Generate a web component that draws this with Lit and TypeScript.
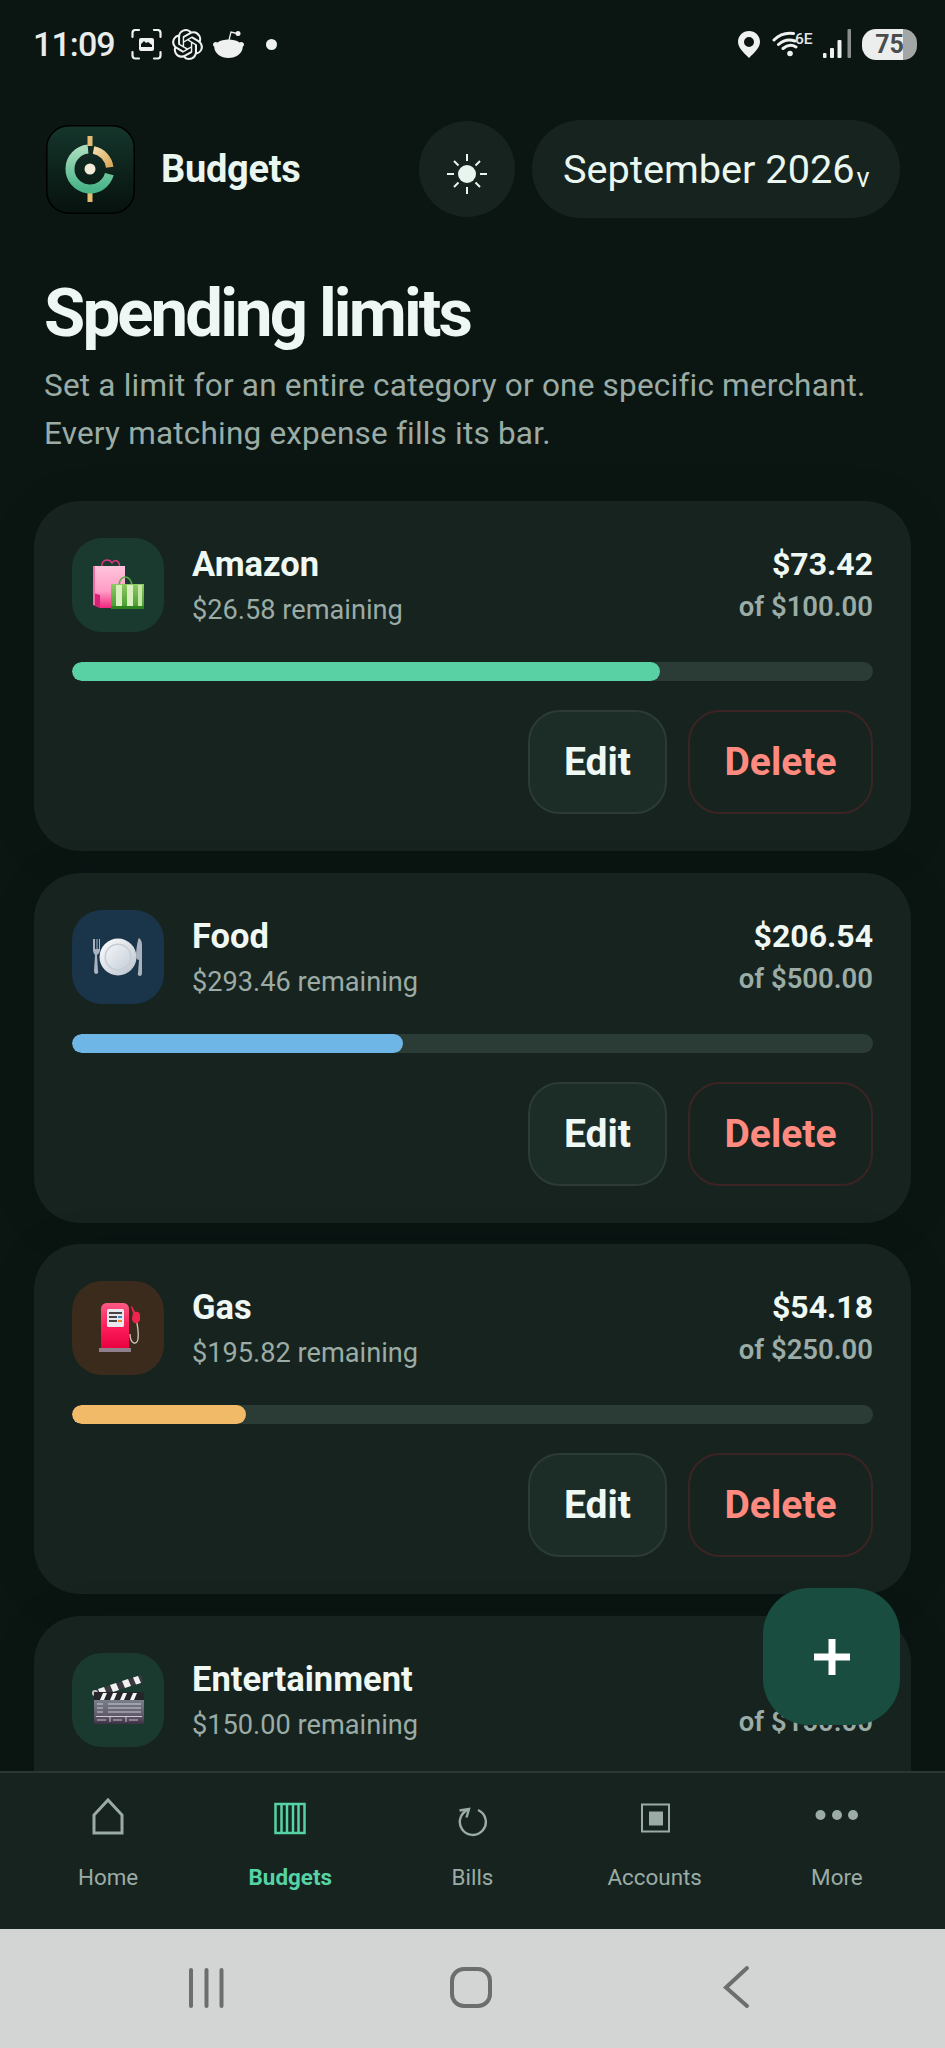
import { LitElement, html, css, svg } from "lit";
import { customElement } from "lit/decorators.js";

const bags = svg`<svg class="emoji" viewBox="0 0 52 52"><defs>
<linearGradient id="pk" x1="0" y1="0" x2="0" y2="1"><stop offset="0" stop-color="#ffc4dc"/><stop offset=".6" stop-color="#ff9cc6"/><stop offset="1" stop-color="#f0277f"/></linearGradient>
<linearGradient id="gn" x1="0" y1="0" x2="0" y2="1"><stop offset="0" stop-color="#8fca62"/><stop offset="1" stop-color="#3f9a2c"/></linearGradient></defs>
<path d="M10 10C9 3 12 1 15 1s4 1 5 3c1-2 3-3 5-2 2 1 3 4 2 8" fill="none" stroke="#d8377f" stroke-width="1.500"/>
<path d="M3 7h30v42H8l-7-3z" fill="url(#pk)"/><path d="M1 34l7 2v13l-7-3z" fill="#d81f78"/><path d="M1 7h2v39H1z" fill="#f76aa8"/>
<path d="M27 27c0-6 3-9 6-9s7 3 7 9" fill="none" stroke="#5aae42" stroke-width="1.500"/>
<rect x="19" y="25" width="33" height="25" fill="url(#gn)"/>
<rect x="24" y="26" width="6" height="23" fill="#d9efc0"/><rect x="35" y="26" width="6" height="23" fill="#d9efc0"/><rect x="46" y="26" width="4" height="23" fill="#c5e6a6"/>
<rect x="19" y="47" width="33" height="3" fill="#2f8422"/></svg>`;

const plate = svg`<svg class="emoji" viewBox="0 0 52 52"><defs>
<linearGradient id="pl" x1="0" y1="0" x2="1" y2="1"><stop offset="0" stop-color="#fff"/><stop offset="1" stop-color="#b9c2cc"/></linearGradient>
<linearGradient id="pi" x1="0" y1="0" x2="1" y2="1"><stop offset="0" stop-color="#f2f4f7"/><stop offset="1" stop-color="#c8d0d9"/></linearGradient></defs>
<path d="M1 1v11c0 3 1.500 4 2 5l-1 16c0 2 1 3 2 3s3-1 2-3L5 17c1-1 3-2 3-5V1H7v10H5.500V1h-1v10H3V1z" fill="#aab3bd" transform="translate(0 7)"/>
<circle cx="26" cy="26" r="18.500" fill="url(#pl)"/><circle cx="26" cy="26" r="13.500" fill="#c4ccd5"/><circle cx="26" cy="26" r="12" fill="url(#pi)"/>
<path d="M46 0c2.500 2 3 4 3 7v28c0 2-1 3-2 3s-3-1-2-3l1-13c-1 0-3-1-3-3 0-8 2-19 3-19z" fill="#aab3bd" transform="translate(1 7)"/></svg>`;

const pump = svg`<svg class="emoji" viewBox="0 0 52 52"><defs>
<linearGradient id="rd" x1="0" y1="0" x2="0" y2="1"><stop offset="0" stop-color="#ff5a85"/><stop offset=".5" stop-color="#ff1f5c"/><stop offset="1" stop-color="#e8003f"/></linearGradient></defs>
<path d="M9 47V7c0-4 3-6 6-6h16c3 0 6 2 6 6v40z" fill="url(#rd)"/>
<rect x="15" y="7" width="17" height="18" rx="1.500" fill="#e8e8ee"/>
<rect x="17" y="10" width="13" height="2" fill="#444"/><rect x="17" y="14" width="8" height="2" fill="#444"/><rect x="26" y="14" width="4" height="2" fill="#3c8bc9"/><rect x="17" y="18" width="8" height="2" fill="#444"/><rect x="26" y="18" width="4" height="2" fill="#e58a2d"/>
<rect x="7" y="46" width="32" height="4" fill="#8f7f8a"/>
<path d="M38 32c0 10 7 12 8 5 .5-4-.5-14-2-20" fill="none" stroke="#d4cdbf" stroke-width="1.300"/>
<path d="M40 4l3 6c2-1 5 0 5 3v4c0 3-3 5-5 4-2 0-3-3-3-5l1-5-2-6z" fill="#f0244f"/></svg>`;

const clapper = svg`<svg class="emoji" viewBox="0 0 52 52"><defs>
<linearGradient id="cb" x1="0" y1="0" x2="0" y2="1"><stop offset="0" stop-color="#79808a"/><stop offset=".7" stop-color="#5f5668"/><stop offset="1" stop-color="#3d2f45"/></linearGradient></defs>
<path d="M1 17L49 1l2 7L3 24z" fill="#3c3a40"/>
<path d="M6 15l6-2 3 7-6 2zM18 11l6-2 3 7-6 2zM30 7l6-2 3 7-6 2zM41 3.500l5-1.500 3 7-5 1.500z" fill="#f1f1f1"/>
<circle cx="3" cy="19" r="3" fill="#c9c9cc"/>
<rect x="2" y="18" width="50" height="9" fill="#26252b"/>
<path d="M11 19h4l-3 7H8zM21 19h4l-3 7h-4zM31 19h4l-3 7h-4zM41 19h4l-3 7h-4z" fill="#f4f4f4"/>
<rect x="2" y="26" width="50" height="24" fill="url(#cb)"/>
<path d="M5 30h6M5 34h6M5 38h6M16 30h33M16 34h33M16 38h33M4 42.500h46M18 43v5M34 43v5" stroke="#d5d6da" stroke-width=".9" fill="none"/>
<path d="M5 46h9M21 46h9M37 46h9" stroke="#c0bfc7" stroke-width="1"/></svg>`;

interface Budget { name: string; spent: number; limit: number; icon: unknown; tint: string; fill: string; partial?: boolean; }
const budgets: Budget[] = [
  { name: "Amazon", spent: 73.42, limit: 100, icon: bags, tint: "green", fill: "#5ad1a5" },
  { name: "Food", spent: 206.54, limit: 500, icon: plate, tint: "blue", fill: "#6db6e6" },
  { name: "Gas", spent: 54.18, limit: 250, icon: pump, tint: "brown", fill: "#f0ba69" },
  { name: "Entertainment", spent: 0, limit: 150, icon: clapper, tint: "green", fill: "#5ad1a5", partial: true },
];
const money = (n: number) => "$" + n.toFixed(2);

@customElement("app-root")
export class AppRoot extends LitElement {
  static styles = css`
    :host { display: block; font-family: Roboto, "Noto Sans", sans-serif; }
    * { box-sizing: border-box; }
    .screen { position: relative; height: 2048px; display: flex; flex-direction: column; overflow: hidden; background: #0b1613; color: #eaf6f0; }
    .status { height: 88px; flex: none; display: flex; align-items: center; justify-content: space-between; padding: 0 28px 0 33px; }
    .st-left, .st-right { display: flex; align-items: center; }
    .time { font-size: 34px; font-weight: 500; color: #e8ecea; width: 88px; letter-spacing: -.9px; }
    .st-left svg { display: block; }
    .st-left { gap: 10px; }
    .dot { width: 11px; height: 11px; border-radius: 50%; background: #eef1ef; margin-left: 11.500px; }
    .st-right svg { display: block; }
    .wifi { margin-left: 12px; }
    .signal { margin-left: 7px; }
    .battery { width: 55px; height: 31px; border-radius: 14px; margin-left: 10px; background: linear-gradient(90deg, #eceeed 0 75%, #a2a6a4 75% 100%); color: #4a4d4c; font-size: 25px; font-weight: 700; display: flex; align-items: center; justify-content: center; }
    .main { flex: 1; min-height: 0; overflow: hidden; }
    .top { display: flex; align-items: center; height: 98px; margin-top: 32px; padding: 0 45px 0 46px; }
    .logo { width: 89px; height: 89px; flex: none; display: block; }
    .app-name { font-size: 38px; font-weight: 700; margin-left: 26px; flex: 1; letter-spacing: -.3px; }
    .theme { width: 96px; height: 96px; border-radius: 50%; background: #16231f; display: flex; align-items: center; justify-content: center; flex: none; }
    .theme svg { display: block; margin-top: 10px; }
    .month { height: 98px; width: 368px; margin-left: 17px; border-radius: 49px; background: #16231f; display: flex; align-items: center; padding-left: 31px; font-size: 39.700px; flex: none; }
    .chev { display: inline-block; font-size: 27px; margin-left: 2px; transform: translateY(4px); }
    .intro { padding: 0 44px; margin-top: 57px; }
    h1 { margin: 0; font-size: 67px; line-height: 76px; font-weight: 700; letter-spacing: -2.850px; color: #eef7f3; }
    .intro p { margin: 11px 0 0; font-size: 31.500px; line-height: 48px; color: #9aaca5; letter-spacing: .2px; }
    .list { padding: 0 34px; margin-top: 43px; display: flex; flex-direction: column; gap: 21.500px; }
    .card { background: #17231f; border-radius: 46px; padding: 37px 38px; height: 350px; flex: none; box-shadow: 0 4px 40px rgba(0,0,0,.18); }
    .head { display: flex; align-items: flex-start; height: 94px; }
    .ic { width: 92px; height: 94px; border-radius: 30px; display: flex; align-items: center; justify-content: center; flex: none; }
    .ic.green { background: #1a3a30; }
    .ic.blue { background: #1a344a; }
    .ic.brown { background: #3b2b1c; }
    .emoji { width: 52px; height: 52px; display: block; }
    .info { flex: 1; margin-left: 28px; padding-top: 5px; }
    .name { font-size: 34.500px; font-weight: 700; line-height: 42px; color: #eff8f3; }
    .sub { font-size: 27.200px; line-height: 42px; margin-top: 4px; color: #9aaca5; }
    .amt { text-align: right; padding-top: 5px; }
    .spent { font-size: 32px; font-weight: 700; line-height: 42px; color: #eff8f3; }
    .of { font-size: 27.500px; font-weight: 600; line-height: 42px; margin-top: 1px; color: #9aaca5; }
    .track { margin-top: 30px; height: 19px; border-radius: 10px; background: #2b3b35; overflow: hidden; }
    .bar { height: 100%; border-radius: 10px; }
    .actions { margin-top: 29px; display: flex; justify-content: flex-end; gap: 21px; }
    .btn { height: 104px; border-radius: 32px; display: flex; align-items: center; justify-content: center; font-size: 39px; font-weight: 700; }
    .edit { width: 139px; background: #1c2c27; border: 2px solid #2c3b36; color: #eff8f3; }
    .del { width: 185px; border: 2px solid #3c2424; color: #ff8a80; }
    .fab { position: absolute; left: 763px; top: 1588px; width: 137px; height: 137px; border-radius: 46px; background: #184d3f; display: flex; align-items: center; justify-content: center; }
    .nav { flex: none; height: 158px; background: #16231f; border-top: 2px solid #2a3833; padding: 0 17px; display: grid; grid-template-columns: repeat(5, 1fr); }
    .tab { display: flex; flex-direction: column; align-items: center; color: #9aaca5; font-size: 22.400px; }
    .tab svg { display: block; margin-top: 24px; height: 40px; }
    .tab span { margin-top: 25px; line-height: 30px; }
    .tab.on { color: #56d3a5; font-weight: 700; }
    .sys { flex: none; height: 119px; background: #d3d5d4; display: flex; align-items: center; justify-content: center; }
    .sys svg { display: block; }
  `;

  render() {
    return html`<div class="screen">
      <div class="status">
        <div class="st-left">
          <div class="time">11:09</div>
          <svg width="31" height="31" viewBox="0 0 31 31" fill="none" stroke="#eef1ef" stroke-width="2.200" stroke-linecap="round"><path d="M1.500 8V4q0-3 3-3H8M23 1h3.500q3 0 3 3v4M29.500 23v3.500q0 3-3 3H23M8 29.500H4.500q-3 0-3-3V23"/><rect x="8" y="9" width="15" height="13" rx="2" fill="#eef1ef" stroke="none"/><path d="M10 15l3-3 2 2 2-1 4 3v2H10z" fill="#0b1613" stroke="none"/></svg>
          <svg width="31" height="31" viewBox="0 0 24 24" fill="#eef1ef"><path d="M22.2819 9.8211a5.9847 5.9847 0 0 0-.5157-4.9108 6.0462 6.0462 0 0 0-6.5098-2.9A6.0651 6.0651 0 0 0 4.9807 4.1818a5.9847 5.9847 0 0 0-3.9977 2.9 6.0462 6.0462 0 0 0 .7427 7.0966 5.98 5.98 0 0 0 .511 4.9107 6.051 6.051 0 0 0 6.5146 2.9001A5.9847 5.9847 0 0 0 13.2599 24a6.0557 6.0557 0 0 0 5.7718-4.2058 5.9894 5.9894 0 0 0 3.9977-2.9001 6.0557 6.0557 0 0 0-.7475-7.0729zm-9.022 12.6081a4.4755 4.4755 0 0 1-2.8764-1.0408l.1419-.0804 4.7783-2.7582a.7948.7948 0 0 0 .3927-.6813v-6.7369l2.02 1.1686a.071.071 0 0 1 .038.052v5.5826a4.504 4.504 0 0 1-4.4945 4.4944zm-9.6607-4.1254a4.4708 4.4708 0 0 1-.5346-3.0137l.142.0852 4.783 2.7582a.7712.7712 0 0 0 .7806 0l5.8428-3.3685v2.3324a.0804.0804 0 0 1-.0332.0615L9.74 19.9502a4.4992 4.4992 0 0 1-6.1408-1.6464zM2.3408 7.8956a4.485 4.485 0 0 1 2.3655-1.9728V11.6a.7664.7664 0 0 0 .3879.6765l5.8144 3.3543-2.0201 1.1685a.0757.0757 0 0 1-.071 0l-4.8303-2.7865A4.504 4.504 0 0 1 2.3408 7.872zm16.5963 3.8558L13.1038 8.364 15.1192 7.2a.0757.0757 0 0 1 .071 0l4.8303 2.7913a4.4944 4.4944 0 0 1-.6765 8.1042v-5.6772a.79.79 0 0 0-.407-.667zm2.0107-3.0231l-.142-.0852-4.7735-2.7818a.7759.7759 0 0 0-.7854 0L9.409 9.2297V6.8974a.0662.0662 0 0 1 .0284-.0615l4.8303-2.7866a4.4992 4.4992 0 0 1 6.6802 4.66zM8.3065 12.863l-2.02-1.1638a.0804.0804 0 0 1-.038-.0567V6.0742a4.4992 4.4992 0 0 1 7.3757-3.4537l-.142.0805L8.704 5.459a.7948.7948 0 0 0-.3927.6813zm1.0976-2.3654l2.602-1.4998 2.6069 1.4998v2.9994l-2.5974 1.4997-2.6067-1.4997Z"/></svg>
          <svg width="31" height="29" viewBox="0 0 31 29" fill="#eef1ef"><path d="M0 14.500c0-2 2.500-3.300 4.500-2 3-2.200 7-3 11-3s8 .8 11 3c2-1.300 4.500 0 4.500 2 0 1-.6 1.800-1.200 2.200C29.500 23.500 23 28 15.500 28S1.500 23.500 1.200 16.700C.6 16.300 0 15.500 0 14.500z"/><path d="M16 10l2-8 6 1.500" fill="none" stroke="#eef1ef" stroke-width="1.300"/><circle cx="25" cy="3.500" r="2.500"/></svg>
          <div class="dot"></div>
        </div>
        <div class="st-right">
          <svg width="22" height="27" viewBox="0 0 22 27"><path fill-rule="evenodd" d="M11 0C5 0 0 4.700 0 10.800 0 17 6 22 11 27c5-5 11-10 11-16.200C22 4.700 17 0 11 0zm0 6a5 5 0 1 1 0 10 5 5 0 0 1 0-10z" fill="#eef1ef"/></svg>
          <svg class="wifi" width="44" height="28" viewBox="0 0 44 28"><path d="M2 10C8 4 15 2.500 21.500 3.500M6.500 14.500c5-4.500 11-5.500 16.500-3.500M11 18.500c4-3.500 9-4 13-1.500" fill="none" stroke="#eef1ef" stroke-width="3" stroke-linecap="round"/><circle cx="18" cy="23.500" r="2.800" fill="#eef1ef"/><text x="23" y="13.500" font-size="15.500" font-weight="500" fill="#e4e7e5" font-family="Roboto">6E</text></svg>
          <svg class="signal" width="29" height="30" viewBox="0 0 29 30"><rect x="0" y="24" width="3.500" height="5" rx="1" fill="#eef1ef"/><rect x="7" y="19" width="4" height="10" rx="1" fill="#eef1ef"/><rect x="14.500" y="11" width="4" height="18" rx="1" fill="#eef1ef"/><rect x="24.500" y="0" width="3.500" height="29" rx="1" fill="#8a8e8c"/></svg>
          <div class="battery">75</div>
        </div>
      </div>
      <div class="main">
        <div class="top">
          <svg class="logo" viewBox="0 0 89 89"><defs>
            <linearGradient id="lg" x1="0" y1="0" x2="0" y2="1"><stop offset="0" stop-color="#15362c"/><stop offset=".6" stop-color="#0c1f19"/><stop offset="1" stop-color="#07120e"/></linearGradient>
            <linearGradient id="lr" x1="0" y1="0" x2="0" y2="1"><stop offset="0" stop-color="#a8dcbc"/><stop offset="1" stop-color="#48b488"/></linearGradient>
            <linearGradient id="lo" x1="0" y1="0" x2="1" y2="1"><stop offset="0" stop-color="#f3dba8"/><stop offset="1" stop-color="#d9a95a"/></linearGradient></defs>
            <rect x=".75" y=".75" width="87.500" height="87.500" rx="22" fill="url(#lg)" stroke="#000" stroke-width="1.500"/>
            <rect x="41.500" y="11" width="5" height="10" fill="#e3bb72"/><rect x="41.500" y="67" width="5" height="10" fill="#e3bb72"/>
            <path d="M42 24.100A20 20 0 1 0 63.300 49.200" fill="none" stroke="url(#lr)" stroke-width="9"/>
            <path d="M47.500 25A20 20 0 0 1 63.700 42.300" fill="none" stroke="url(#lo)" stroke-width="7.500"/>
            <circle cx="44" cy="44" r="5.500" fill="#f4ead8"/></svg>
          <div class="app-name">Budgets</div>
          <div class="theme"><svg width="40" height="40" viewBox="0 0 40 40" stroke="#e8f4ee" stroke-width="2" fill="none"><circle cx="20" cy="20" r="9" fill="#e8f4ee" stroke="none"/><path d="M20 0v7M20 33v7M0 20h7M33 20h7M7 7l4.500 4.500M28.500 28.500L33 33M7 33l4.500-4.500M28.500 11.500L33 7"/></svg></div>
          <div class="month"><div>September 2026<span class="chev">v</span></div></div>
        </div>
        <div class="intro">
          <h1>Spending limits</h1>
          <p>Set a limit for an entire category or one specific merchant.<br>Every matching expense fills its bar.</p>
        </div>
        <div class="list">
          ${budgets.map((b) => html`<div class="card">
            <div class="head">
              <div class="ic ${b.tint}">${b.icon}</div>
              <div class="info"><div class="name">${b.name}</div><div class="sub">${money(b.limit - b.spent)} remaining</div></div>
              <div class="amt">${b.partial ? html`<div class="spent">&nbsp;</div>` : html`<div class="spent">${money(b.spent)}</div>`}<div class="of">of ${money(b.limit)}</div></div>
            </div>
            ${b.partial ? "" : html`<div class="track"><div class="bar" style="width:${(b.spent / b.limit) * 100}%;background:${b.fill}"></div></div>
            <div class="actions"><div class="btn edit">Edit</div><div class="btn del">Delete</div></div>`}
          </div>`)}
        </div>
      </div>
      <div class="nav">
        <div class="tab"><svg width="32" height="40" viewBox="0 0 32 40" fill="none" stroke="#9aaca5" stroke-width="3"><path d="M2 36V18L16 3l14 15v18z"/></svg><span>Home</span></div>
        <div class="tab on"><svg width="32" height="40" viewBox="0 0 32 40" fill="none" stroke="#56d3a5" stroke-width="2.500"><path d="M1.500 7h29v29h-29zM7.500 7v29M13 7v29M19 7v29M24.500 7v29"/></svg><span>Budgets</span></div>
        <div class="tab"><svg width="32" height="40" viewBox="0 0 32 40" fill="none" stroke="#9aaca5" stroke-width="2.400"><path d="M22 13A13 13 0 1 1 13 12.500"/><path d="M3.500 13.500L13 12l-2.500 8.500"/></svg><span>Bills</span></div>
        <div class="tab"><svg width="32" height="40" viewBox="0 0 32 40"><rect x="3" y="7.500" width="27" height="27" fill="none" stroke="#9aaca5" stroke-width="2"/><rect x="10" y="14.500" width="14" height="14" fill="#9aaca5"/></svg><span>Accounts</span></div>
        <div class="tab"><svg width="44" height="40" viewBox="0 0 44 40" fill="#9aaca5"><circle cx="5.500" cy="18" r="5"/><circle cx="22" cy="18" r="5"/><circle cx="38" cy="18" r="5"/></svg><span>More</span></div>
      </div>
      <div class="sys">
        <svg width="945" height="119" viewBox="0 0 945 119" fill="none" stroke="#6b6e6d" stroke-width="4" stroke-linecap="round"><path d="M191 41v36M206.500 41v36M221.500 41v36"/><rect x="452" y="40" width="38" height="37" rx="12"/><path d="M747 39L726 58.500l21 18.500"/></svg>
      </div>
      <div class="fab"><svg width="36" height="36" viewBox="0 0 36 36"><path d="M14.500 0h7v14.500H36v7H21.500V36h-7V21.500H0v-7h14.500z" fill="#fff"/></svg></div>
    </div>`;
  }
}
